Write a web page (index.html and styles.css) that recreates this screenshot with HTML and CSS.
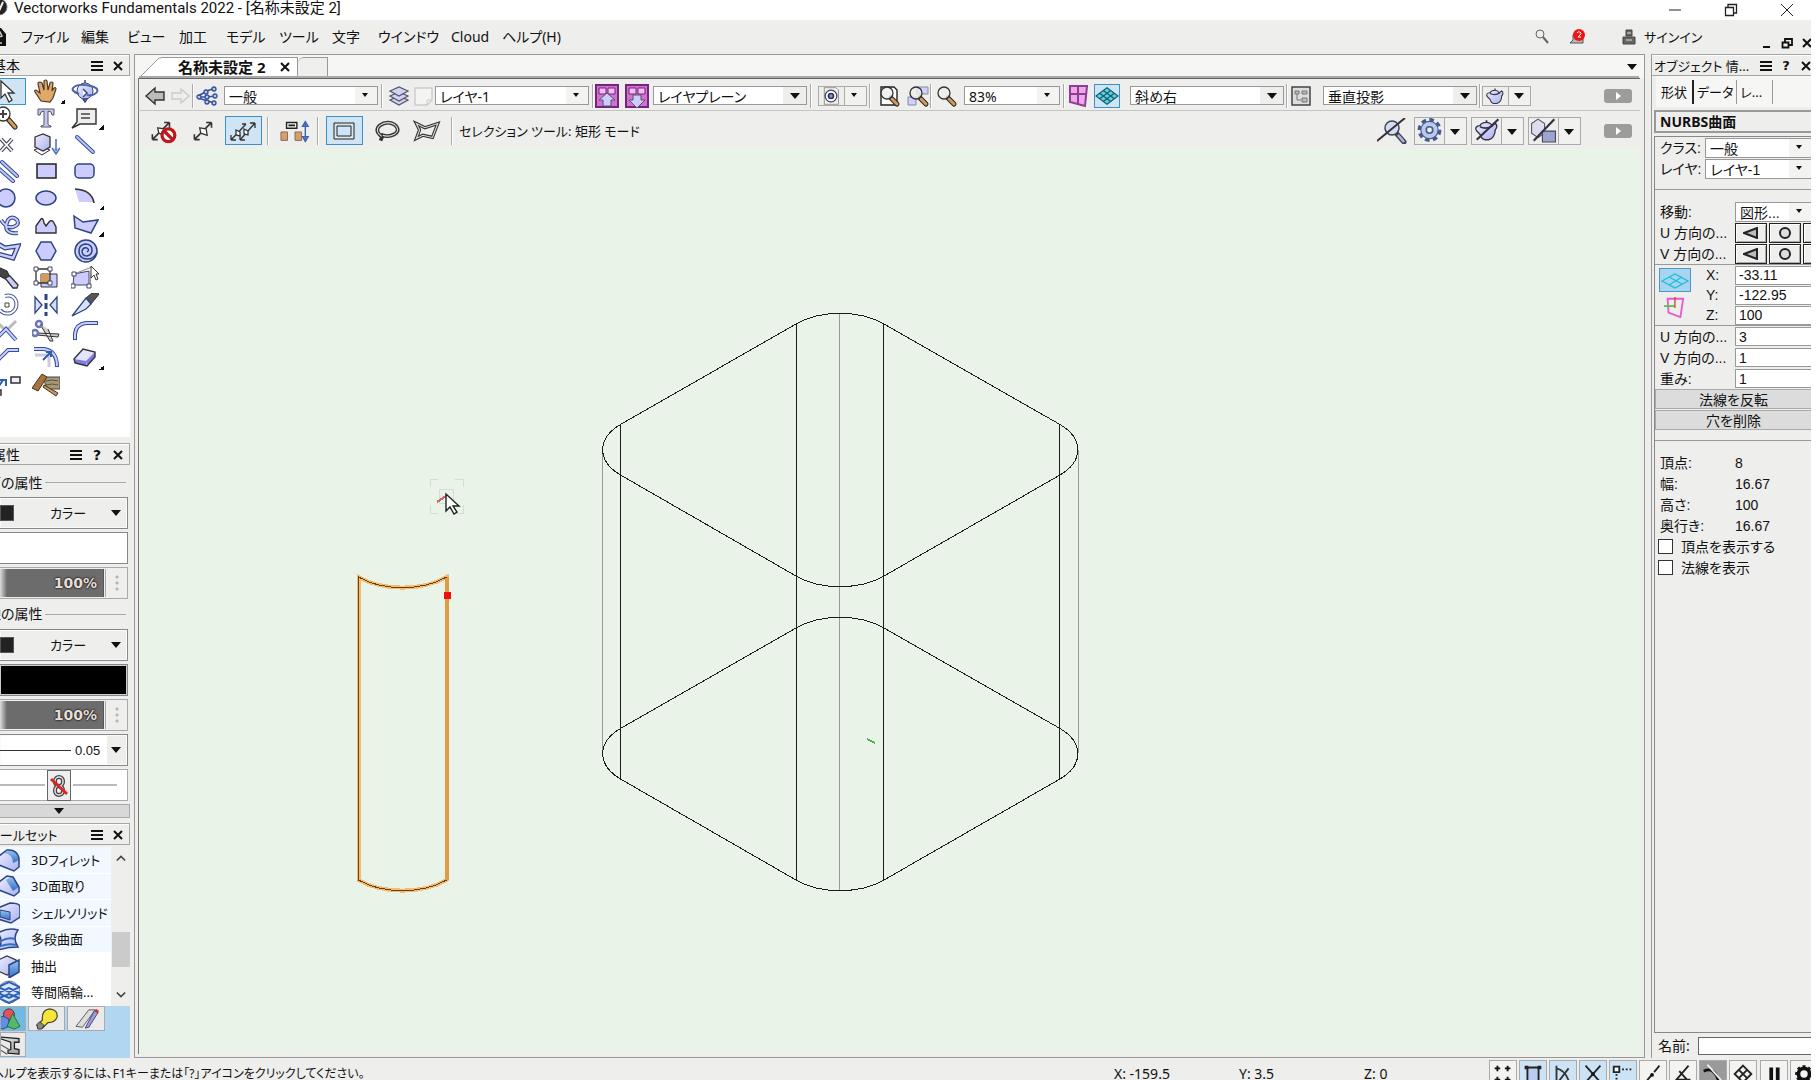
FILE: index.html
```html
<!DOCTYPE html>
<html lang="ja">
<head>
    <meta charset="UTF-8">
    <title>Vectorworks Fundamentals 2022 - [名称未設定 2]</title>
    <link rel="stylesheet" href="styles.css">
</head>
<body>
<!-- shared icons -->
<svg class="defs" aria-hidden="true">
    <linearGradient id="blue" x1="0" y1="0" x2="1" y2="1"><stop offset="0" stop-color="#eef"/><stop offset="1" stop-color="#a9b0f0"/></linearGradient>
    <linearGradient id="deep" x1="0" y1="0" x2="0" y2="1"><stop offset="0" stop-color="#9cc4f2"/><stop offset="1" stop-color="#2f6fc8"/></linearGradient>
    <linearGradient id="grey" x1="0" y1="0" x2="1" y2="1"><stop offset="0" stop-color="#fff"/><stop offset="1" stop-color="#999"/></linearGradient>
    <symbol id="menu" viewBox="0 0 12 12"><path d="M0 2h12M0 6h12M0 10h12" stroke="#111" stroke-width="2"/></symbol>
    <symbol id="close" viewBox="0 0 12 12"><path d="M2 2l8 8M10 2l-8 8" stroke="#111" stroke-width="2"/></symbol>
    <symbol id="lens" viewBox="0 0 24 24"><path d="M14 14l6 6" stroke="#222" stroke-width="5" stroke-linecap="round"/><path d="M15 15l5 5" stroke="#d49a5a" stroke-width="3" stroke-linecap="round"/><circle cx="10" cy="9" r="6" fill="#eee" fill-opacity=".8" stroke="#333" stroke-width="1.3"/></symbol>
    <symbol id="teapot" viewBox="0 0 24 24"><path d="M6 8c-4 0-5 3-3 5l3 3c1 3 2 5 5 5h3c4-1 6-5 6-9 2-2 2-5 0-6l-3 2c-1-2-3-3-5-3s-5 1-6 3z" fill="url(#blue)" stroke="#334" stroke-width="1.3"/><path d="M6 9q6 3 12-1M12 5V3" fill="none" stroke="#334" stroke-width="1.5"/></symbol>
    <symbol id="handles" viewBox="0 0 28 24"><path d="M5 20L21 4M5 20v-5M5 20h5M21 4v5M21 4h-5" stroke="#333" stroke-width="1.5" fill="none"/><path d="M10 9l6 1 1 6-6-2z" fill="#fff" stroke="#333" stroke-width="1.2"/></symbol>
</svg>

<div class="app">
    <header class="titlebar">
        <svg class="logo" viewBox="0 0 18 18"><circle cx="9" cy="9" r="8" fill="#222" stroke="#777"/><path d="M6 4l3 9 4-9" stroke="#eee" stroke-width="2" fill="none"/></svg>
        <span class="title">Vectorworks Fundamentals 2022 - [名称未設定 2]</span>
        <div class="winbtns">
            <button aria-label="最小化"><svg viewBox="0 0 14 14"><path d="M1 7h12" stroke="#222"/></svg></button>
            <button aria-label="元に戻す"><svg viewBox="0 0 14 14"><path d="M1.5 4.5h8v8h-8zM4 4V1.500h8.500v8.500H10" fill="none" stroke="#222" stroke-width="1.3"/></svg></button>
            <button aria-label="閉じる"><svg viewBox="0 0 14 14"><path d="M1 1l12 12M13 1L1 13" stroke="#222"/></svg></button>
        </div>
    </header>

    <nav class="menubar">
        <svg class="doclogo" viewBox="0 0 16 20"><path d="M1 1h9l5 6v12H1z" fill="#111"/><path d="M4 7l5-2 2 4-5 2zM5 16h6" stroke="#ccc" stroke-width="1.5" fill="none"/></svg>
        <ul class="menus">
            <li>ファイル</li>
            <li>編集</li>
            <li>ビュー</li>
            <li>加工</li>
            <li>モデル</li>
            <li>ツール</li>
            <li>文字</li>
            <li>ウインドウ</li>
            <li>Cloud</li>
            <li>ヘルプ(H)</li>
        </ul>
        <div class="account">
            <svg viewBox="0 0 16 16"><circle cx="6" cy="5" r="4" fill="#eee" stroke="#666"/><path d="M9 8l5 6" stroke="#666" stroke-width="2"/></svg>
            <svg class="bell" viewBox="0 0 18 18"><path d="M2 15l3-3V7q1-3 5-3t5 3v8z" fill="#bbb" stroke="#555"/><circle cx="11" cy="7" r="6" fill="#f01414"/><path d="M9 5q1-2 3-1t0 3l-2 2h3" stroke="#fff" fill="none"/></svg>
            <svg class="user" viewBox="0 0 14 16"><path d="M4 1h6v6H4zM1 8h12v7H1z" fill="#666" stroke="#444"/><path d="M5 4h4M4 11h6" stroke="#ddd"/></svg>
            <a href="#">サインイン</a>
        </div>
        <div class="mdi">
            <svg viewBox="0 0 12 12"><path d="M2 10h7" stroke="#111" stroke-width="2"/></svg>
            <svg viewBox="0 0 12 12"><path d="M1.500 5.500h6v5h-6zM4 5V2h7v6H8" fill="none" stroke="#111" stroke-width="1.800"/></svg>
            <svg viewBox="0 0 12 12"><use href="#close"/></svg>
        </div>
    </nav>

    <div class="work">
        <aside class="left">
            <h2 class="head"><span class="cut">基本</span><svg><use href="#menu"/></svg><svg><use href="#close"/></svg></h2>
            <div class="tools">
                <button class="on"><svg viewBox="0 0 28 24"><path d="M8 2v17l4-4 4 8 3-2-4-7h6z" fill="#fff" stroke="#333" stroke-width="1.3"/></svg></button>
                <button class="more"><svg viewBox="0 0 28 24"><path d="M9 22L3 13q-1-2 1-2l4 3-2-9q0-2 2-2l2 1 2 7 0-9q2-2 3 0l1 9 2-7q2-2 3 0l-1 8 2-3q2-1 2 1l-3 9-3 4z" fill="#e2a866" stroke="#4a3a2a" stroke-width="1.2"/></svg></button>
                <button><svg viewBox="0 0 28 24"><circle cx="14" cy="12" r="8" fill="url(#blue)" stroke="#446"/><path d="M8 15q-8-3-6-6 4-5 18-2 8 2 6 6-3 4-10 3" fill="none" stroke="#4a62a8" stroke-width="2"/><path d="M12 10l4 4-4 4M14 1v3M12 20h4l-2 3z" stroke="#35477f" stroke-width="1.500" fill="#fff"/></svg></button>

                <button><svg viewBox="0 0 28 24"><path d="M15 13l7 8" stroke="#222" stroke-width="5" stroke-linecap="round"/><path d="M16 14l6 7" stroke="#d49a5a" stroke-width="3" stroke-linecap="round"/><circle cx="10" cy="8" r="7" fill="#fff" stroke="#333" stroke-width="1.300"/><path d="M6 8h8M10 4v8" stroke="#444" stroke-width="2"/></svg></button>
                <button><svg viewBox="0 0 28 24"><path d="M6 3h16v6h-2q0-4-4-4v13q0 2 3 2v1H9v-1q3 0 3-2V5q-4 0-4 4H6z" fill="#c6c8f4" stroke="#556" /></svg></button>
                <button class="more"><svg viewBox="0 0 28 24"><path d="M6 3h19v15H9l-8 4 5-6z" fill="#eee" stroke="#333" stroke-width="1.400"/><path d="M10 8h9M10 12h9" stroke="#444" stroke-width="1.500"/></svg></button>

                <button><svg viewBox="0 0 28 24"><path d="M8 6l11 12M19 6L8 18" stroke="#445" stroke-width="4"/><path d="M8 6l11 12M19 6L8 18" stroke="#fff" stroke-width="1.800"/></svg></button>
                <button><svg viewBox="0 0 28 24"><path d="M2 17l8-3 8 3-8 5z" fill="#fff" stroke="#333"/><path d="M3 4l8-3 7 3v10l-7 4-8-4z" fill="url(#blue)" stroke="#333" stroke-width="1.300"/><path d="M24 6v12M20 15l4 6 4-6" stroke="#4a6cc0" stroke-width="1.500" fill="#cdf"/></svg></button>
                <button><svg viewBox="0 0 28 24"><path d="M6 4l16 15" stroke="#334e98" stroke-width="4" stroke-linecap="round"/><path d="M6 4l16 15" stroke="#bcc4f6" stroke-width="2" stroke-linecap="round"/></svg></button>

                <button><svg viewBox="0 0 28 24"><path d="M4 8l16 14M9 3l15 14" stroke="#334e98" stroke-width="4" stroke-linecap="round"/><path d="M4 8l16 14M9 3l15 14" stroke="#bcc4f6" stroke-width="2" stroke-linecap="round"/></svg></button>
                <button><svg viewBox="0 0 28 24"><path d="M5 5h19v14H5z" fill="#ccccff" stroke="#222" stroke-width="1.500"/></svg></button>
                <button><svg viewBox="0 0 28 24"><rect x="4" y="5" width="19" height="14" rx="4" fill="#ccccff" stroke="#2c4480" stroke-width="1.500"/></svg></button>

                <button><svg viewBox="0 0 28 24"><circle cx="13" cy="12" r="9" fill="#ccccff" stroke="#2c4480" stroke-width="1.500"/></svg></button>
                <button><svg viewBox="0 0 28 24"><ellipse cx="14" cy="12" rx="10" ry="7" fill="#ccccff" stroke="#2c4480" stroke-width="1.500"/></svg></button>
                <button class="more"><svg viewBox="0 0 28 24"><path d="M4 3l4 13h15Q21 4 4 3z" fill="#ccccff"/><path d="M4 3q17 1 19 14" fill="none" stroke="#333" stroke-width="1.600"/></svg></button>

                <button><svg viewBox="0 0 28 24"><path d="M8 7q6 9 12 7 7-2 4-7-5-5-9 0-3 6-1 10 3 4 11 3" fill="none" stroke="#2c4480" stroke-width="4"/><path d="M8 7q6 9 12 7 7-2 4-7-5-5-9 0-3 6-1 10 3 4 11 3" fill="none" stroke="#ccccff" stroke-width="2"/></svg></button>
                <button><svg viewBox="0 0 28 24"><path d="M4 20V13l5-7q2-2 3 4l2 3 3-4q3-3 5 1l2 4v6z" fill="#ccccff" stroke="#333" stroke-width="1.400"/></svg></button>
                <button class="more"><svg viewBox="0 0 28 24"><path d="M3 3l9 6 15-2-7 13-16-5z" fill="#ccccff" stroke="#2c4480" stroke-width="1.500"/></svg></button>

                <button><svg viewBox="0 0 28 24"><path d="M3 4l9 5 13-2-5 12-15-4" fill="none" stroke="#2c4480" stroke-width="5"/><path d="M3 4l9 5 13-2-5 12-15-4" fill="none" stroke="#ccccff" stroke-width="2.500"/></svg></button>
                <button><svg viewBox="0 0 28 24"><path d="M9 3h10l5 9-5 9H9l-5-9z" fill="#ccccff" stroke="#2c4480" stroke-width="1.500"/></svg></button>
                <button><svg viewBox="0 0 28 24"><circle cx="15" cy="12" r="11" fill="#ccccff" stroke="#2c4480" stroke-width="1.500"/><path d="M26 13q-3 7-9 7-9 0-9-8 0-6 6-7 7 0 7 6 0 5-5 6-5 0-5-5 1-4 5-3 3 2 0 4" fill="none" stroke="#2c4480" stroke-width="1.500"/></svg></button>

                <button><svg viewBox="0 0 28 24"><path d="M5 1l9 4 3 6-5 2-9-5z" fill="#444" stroke="#222"/><path d="M12 12l5-2 8 9-1 3-4 0z" fill="#ccccff" stroke="#333" stroke-width="1.300"/></svg></button>
                <button><svg viewBox="0 0 28 24"><path d="M9 8h16v13H9z" fill="#ccccff" stroke="#334"/><path d="M9 8h8v9H9z" fill="#d49a5a"/><path d="M4 3h14v14H4z" fill="none" stroke="#333" stroke-width="1.300"/><path d="M2 1h4v4H2zM16 1h4v4h-4zM2 15h4v4H2zM16 15h4v4h-4z" fill="#fff" stroke="#446"/></svg></button>
                <button><svg viewBox="0 0 28 24"><path d="M3 8l15-3v14H2z" fill="#ccccff" stroke="#446"/><path d="M3 8L21 1l-2 18" fill="none" stroke="#888"/><path d="M1 6h4v4H1zM0 18h4v4H0zM16 18h4v4h-4z" fill="#fff" stroke="#446"/><path d="M20 0v12l3-3 2 5 2-1-2-5h3z" fill="#fff" stroke="#333"/></svg></button>

                <button><svg viewBox="0 0 28 24"><path d="M12 3q8-2 11 5 2 8-5 12-7 2-11-3" fill="none" stroke="#445a9c" stroke-width="4"/><path d="M12 3q8-2 11 5 2 8-5 12-7 2-11-3" fill="none" stroke="#fff" stroke-width="2"/><path d="M12 10h4v4h-4z" fill="none" stroke="#444"/></svg></button>
                <button><svg viewBox="0 0 28 24"><path d="M3 4v16l7-8zM25 4v16l-7-8z" fill="#d4dcfa" stroke="#2c4480" stroke-width="1.300"/><path d="M14 1v22" stroke="#2c4480" stroke-width="3" stroke-dasharray="6 3"/></svg></button>
                <button><svg viewBox="0 0 28 24"><path d="M15 5l6-5 8 0-9 11z" fill="#555" stroke="#333"/><path d="M15 5l5 6-5 5-14 7z" fill="#d6e2fa" stroke="#2c4480" stroke-width="1.300"/></svg></button>

                <button><svg viewBox="0 0 28 24"><path d="M13 12L23 2M13 12L3 2" stroke="#bbb" stroke-width="3"/><path d="M3 20l10-10 10 11" fill="none" stroke="#334e98" stroke-width="4"/><path d="M3 20l10-10 10 11" fill="none" stroke="#ccccff" stroke-width="2"/></svg></button>
                <button><svg viewBox="0 0 28 24"><path d="M8 5l10 17 3 0-5-12M5 14l22 1-1 3-21-2" fill="#ccc" stroke="#333"/><circle cx="7" cy="5" r="3" fill="none" stroke="#6d76b4" stroke-width="2.500"/><circle cx="3" cy="14" r="3" fill="none" stroke="#6d76b4" stroke-width="2.500"/></svg></button>
                <button><svg viewBox="0 0 28 24"><path d="M4 21v-6Q5 5 15 4h12" fill="none" stroke="#334e98" stroke-width="4"/><path d="M4 20v-5Q5 5 15 4h11" fill="none" stroke="#ccccff" stroke-width="2"/></svg></button>

                <button><svg viewBox="0 0 28 24"><path d="M1 18L15 4h11" fill="none" stroke="#334e98" stroke-width="4"/><path d="M1 18L15 4h10" fill="none" stroke="#ccccff" stroke-width="2"/></svg></button>
                <button><svg viewBox="0 0 28 24"><path d="M3 9h14v12" stroke="#ccd" stroke-width="3" fill="none"/><path d="M2 3h10q13 2 13 18" fill="none" stroke="#334e98" stroke-width="4"/><path d="M2 3h10q13 2 13 17" fill="none" stroke="#ccccff" stroke-width="2"/><path d="M11 14l7-7M14 6h5v5" stroke="#2d5fae" stroke-width="2" fill="none"/></svg></button>
                <button class="more"><svg viewBox="0 0 28 24"><path d="M3 13l9-10 12 3v5l-8 9-12-3z" fill="#e4e4ff"/><path d="M3 13l12 2v5l-11-3zM15 15l9-9v5l-8 9z" fill="#7d7be4"/><path d="M3 13l9-10 12 3v5l-8 9-12-3z" fill="none" stroke="#333" stroke-width="1.400"/></svg></button>

                <button><svg viewBox="0 0 28 24"><path d="M2 19l8-12M6 7h7v6" stroke="#2d5fae" stroke-width="2" fill="none"/><path d="M18 4h9v6h-9zM0 17h8v5H0z" fill="#eef" stroke="#333" stroke-width="1.500"/></svg></button>
                <button><svg viewBox="0 0 28 24"><path d="M12 4h16v12H14z" fill="#a89878" stroke="#444"/><path d="M14 8q6-2 12 0M14 12q6-2 12 0" stroke="#554" fill="none"/><path d="M0 15L10 1l5 3-9 14z" fill="#a9713c" stroke="#432"/><path d="M12 12l14 8-2 3-13-9z" fill="#c99560" stroke="#432"/></svg></button>
            </div>

            <h2 class="head"><span class="cut">属性</span><svg><use href="#menu"/></svg><b>?</b><svg><use href="#close"/></svg></h2>
            <div class="attrs">
                <div class="legend"><span>面の属性</span></div>
                <div class="pick"><i class="chip"></i><select aria-label="面の種類"><option>カラー</option></select></div>
                <div class="swatch"></div>
                <div class="opacity"><output>100%</output><i class="dots"></i></div>
                <div class="legend"><span>線の属性</span></div>
                <div class="pick"><i class="chip"></i><select aria-label="線の種類"><option>カラー</option></select></div>
                <div class="swatch black"></div>
                <div class="opacity"><output>100%</output><i class="dots"></i></div>
                <div class="pick weight"><i class="stroke"></i><select aria-label="線の太さ"><option>0.05</option></select></div>
                <div class="marker">
                    <i></i>
                    <button aria-label="マーカーのリンク"><svg viewBox="0 0 20 26"><g fill="none" stroke="#444" stroke-width="4"><rect x="6" y="4" width="8" height="9" rx="4"/><rect x="6" y="13" width="8" height="9" rx="4"/></g><g fill="none" stroke="#e4e4e4" stroke-width="1.500"><rect x="6" y="4" width="8" height="9" rx="4"/><rect x="6" y="13" width="8" height="9" rx="4"/></g><path d="M2 6l16 15" stroke="#d22" stroke-width="3"/></svg></button>
                    <i></i>
                </div>
                <button class="fold" aria-label="折りたたむ"></button>
            </div>

            <h2 class="head"><span class="cut long">ツールセット</span><svg><use href="#menu"/></svg><svg><use href="#close"/></svg></h2>
            <div class="toolset">
                <ul>
                    <li class="tint"><svg viewBox="0 0 24 24"><path d="M3 8l8-6q10-1 12 8v9l-5 4-15-6z" fill="url(#blue)"/><path d="M8 5q9 1 9 10l6-3Q23 4 13 2z" fill="url(#deep)"/><path d="M3 8l8-6q10-1 12 8v9l-5 4-15-6z" fill="none" stroke="#2c4480" stroke-width="1.500"/></svg>3Dフィレット</li>
                    <li class="tint"><svg viewBox="0 0 24 24"><path d="M3 8l8-6 6 1 6 10v5l-5 4-15-6z" fill="url(#blue)"/><path d="M10 6l6-4 7 11-6 4z" fill="url(#deep)"/><path d="M3 8l8-6 6 1 6 10v5l-5 4-15-6z" fill="none" stroke="#2c4480" stroke-width="1.500"/></svg>3D面取り</li>
                    <li class="tint"><svg viewBox="0 0 24 24"><path d="M2 7l12-5q10 0 10 4v10l-9 6-13-4z" fill="url(#blue)" stroke="#2c4480" stroke-width="1.500"/><path d="M4 9l10 2v8L4 16z" fill="url(#deep)" stroke="#2c4480"/></svg>シェルソリッド</li>
                    <li class="tint"><svg viewBox="0 0 24 24"><path d="M2 6q10-6 20-3-6 8 0 17-10 0-20 3 6-9 0-17z" fill="url(#blue)" stroke="#2c4480" stroke-width="1.500"/><path d="M5 14q7-4 14-2M5 19q8-3 15-1" stroke="#2f6fc8" fill="none" stroke-width="2"/></svg>多段曲面</li>
                    <li><svg viewBox="0 0 24 24"><path d="M2 6l9-4 9 4v10l-9 5-9-4z" fill="url(#blue)" stroke="#334" stroke-width="1.300"/><path d="M13 11l10-5v12l-10 6z" fill="url(#deep)" stroke="#2c4480" stroke-width="1.500"/></svg>抽出</li>
                    <li><svg viewBox="0 0 24 24"><circle cx="13" cy="12" r="11" fill="#dde6fb" stroke="#889"/><path d="M2 7l11-5 11 5-11 5zM2 13l11-5 11 5-11 5zM3 18l10-4 10 4-10 5z" fill="none" stroke="#2e62b4" stroke-width="2"/></svg>等間隔輪...</li>
                </ul>
                <div class="scroll"><svg viewBox="0 0 12 8"><path d="M1 7l5-5 5 5" fill="none" stroke="#444" stroke-width="2"/></svg><i></i><svg viewBox="0 0 12 8"><path d="M1 1l5 5 5-5" fill="none" stroke="#444" stroke-width="2"/></svg></div>
            </div>
            <div class="sets">
                <button class="on"><svg viewBox="0 0 28 24"><circle cx="15" cy="7" r="6" fill="#e0535c" stroke="#622"/><path d="M2 11l7-2 6 3v8l-7 3-6-3z" fill="#5b8fe8" stroke="#247"/><path d="M19 6l8 14-6 3-8-3z" fill="#58b868" stroke="#264"/></svg></button>
                <button><svg viewBox="0 0 28 24"><path d="M3 19l6-6Q8 2 17 1q9 1 8 9-2 6-10 6l-6 6z" fill="#f8e53a" stroke="#443" stroke-width="1.300"/><path d="M3 18l3-3 5 4-3 4H4z" fill="#888" stroke="#333"/></svg></button>
                <button><svg viewBox="0 0 28 24"><path d="M2 20L16 2h7L9 21z" fill="#ddd" stroke="#555"/><path d="M12 22L22 3l4 2-10 16z" fill="#9a9ce0" stroke="#446"/><path d="M22 3l2-2 3 2-1 3z" fill="#c33"/></svg></button>
                <button><svg viewBox="0 0 28 24"><path d="M0 3l26 2v4l-5 0v7l5 1v5l-12-1v-3l3-1V9z" fill="url(#grey)" stroke="#222" stroke-width="1.400"/><path d="M0 8l15 9M0 14l13 8" stroke="#555" stroke-width="1.300"/></svg></button>
            </div>
        </aside>

        <main class="doc">
            <div class="tabs">
                <svg class="slant" viewBox="0 0 22 21"><path d="M0 21L20 0h2v21z" fill="#fff"/><path d="M0 21L20 1h2" fill="none" stroke="#999"/></svg>
                <div class="tab">名称未設定 2 <svg><use href="#close"/></svg></div>
                <div class="tab blank"></div>
                <i class="tri"></i>
            </div>

            <div class="viewbar">
                <svg class="ic" viewBox="0 0 24 24"><path d="M3 12l9-8v4h9v8h-9v4z" fill="#bbb" stroke="#333" stroke-width="1.400"/></svg>
                <svg class="ic" viewBox="0 0 24 24"><path d="M21 12l-8-7v4H4v6h9v4z" fill="#eee" stroke="#ccc" stroke-width="1.400"/></svg>
                <i class="sep"></i>
                <svg class="ic" viewBox="0 0 24 24"><path d="M3 12l9-5 8-3M3 13h9l8-1M3 14l10 3 6 2" fill="none" stroke="#35509a" stroke-width="1.500"/><g fill="#b9c8f0" stroke="#35509a" stroke-width="1.300"><circle cx="4" cy="13" r="2"/><circle cx="11" cy="8" r="2"/><circle cx="19" cy="5" r="2"/><circle cx="12" cy="13" r="2"/><circle cx="20" cy="12" r="2"/><circle cx="12" cy="18" r="2"/><circle cx="19" cy="19" r="2"/></g></svg>
                <div class="drop small"><select aria-label="クラス"><option>一般</option></select></div>
                <i class="sep"></i>
                <svg class="ic" viewBox="0 0 24 24"><g fill="#d0d4f2" stroke="#556" stroke-width="1.200"><path d="M3 16l9-4 9 4-9 5z"/><path d="M3 12l9-4 9 4-9 5z"/><path d="M3 7l9-4 9 4-9 5z"/></g></svg>
                <svg class="ic" viewBox="0 0 24 24"><path d="M4 4h17v12l-5 5H4z" fill="#f4f4f2" stroke="#ccc" stroke-width="1.400"/><path d="M16 21v-5h5" fill="none" stroke="#ccc"/></svg>
                <div class="drop small"><select aria-label="レイヤ"><option>レイヤ-1</option></select></div>
                <i class="sep"></i>
                <svg class="ic" viewBox="0 0 24 24"><path d="M1 1h22v22H1z" fill="#d46fd4" stroke="#73277a" stroke-width="2"/><path d="M4 4h7v6H4zM13 4h7v6h-7z" fill="#f2c0f0" stroke="#73277a"/><path d="M12 9l8 7h-4v6H8v-6H4z" fill="#ccccff" stroke="#556"/></svg>
                <svg class="ic" viewBox="0 0 24 24"><path d="M1 1h22v22H1z" fill="#d46fd4" stroke="#73277a" stroke-width="2"/><path d="M4 4h7v6H4zM13 4h7v6h-7z" fill="#f2c0f0" stroke="#73277a"/><path d="M12 24l8-8h-4v-5H8v5H4z" fill="#ccccff" stroke="#556"/></svg>
                <div class="drop"><select aria-label="プレーン"><option>レイヤプレーン</option></select></div>
                <i class="sep"></i>
                <button class="split small"><svg viewBox="0 0 24 24"><path d="M4 2h14l3 3v17H4z" fill="#eee" stroke="#888"/><circle cx="12" cy="12" r="7" fill="#fff" stroke="#445" stroke-width="1.500"/><circle cx="12" cy="12" r="3" fill="#7a9ad4" stroke="#335" stroke-width="2"/></svg></button>
                <i class="sep"></i>
                <svg class="ic" viewBox="0 0 24 24"><path d="M4 3h13l3 3v15H4z" fill="#fff" stroke="#222" stroke-width="1.400"/><use href="#lens"/></svg>
                <svg class="ic" viewBox="0 0 24 24"><path d="M11 3h11v7H11zM2 13h8v8H2z" fill="#d0d0ff" stroke="#889"/><use href="#lens"/></svg>
                <i class="sep"></i>
                <svg class="ic"><use href="#lens"/></svg>
                <div class="drop small zoom"><select aria-label="ズーム"><option>83%</option></select></div>
                <i class="sep"></i>
                <svg class="ic" viewBox="0 0 24 24"><path d="M4 2l17 0-2 20-15-4z" fill="#f0a8ec" stroke="#8f3c94" stroke-width="2"/><path d="M12 2v18M4 10h16" stroke="#8f3c94" stroke-width="2"/></svg>
                <button class="mode sq on"><svg viewBox="0 0 26 24"><path d="M1 12L13 3l12 9-12 9z" fill="#62d0e0" stroke="#14606e" stroke-width="1.400"/><path d="M5 9l12 9M9 6l12 9M5 15l12-9M9 18l12-9" stroke="#14606e" stroke-width="1.400"/></svg></button>
                <div class="drop"><select aria-label="ビュー"><option>斜め右</option></select></div>
                <i class="sep"></i>
                <svg class="ic" viewBox="0 0 24 24"><path d="M3 3h18v18H3z" fill="#ddd" stroke="#444" stroke-width="1.500"/><path d="M6 7h4v3H6zM13 7h5v3h-5zM13 14h5v4h-5z" fill="#bbb" stroke="#777"/><path d="M8 10v6h4" stroke="#777" fill="none"/></svg>
                <div class="drop"><select aria-label="投影"><option>垂直投影</option></select></div>
                <i class="sep"></i>
                <button class="split"><svg><use href="#teapot"/></svg></button>
                <button class="pill" aria-label="その他"></button>
            </div>

            <div class="modebar">
                <svg class="wide" viewBox="0 0 28 24"><use href="#handles"/><circle cx="20" cy="16" r="6" fill="#fff" stroke="#c01818" stroke-width="3"/><path d="M16 12l8 8" stroke="#c01818" stroke-width="3"/></svg>
                <svg class="wide"><use href="#handles"/></svg>
                <button class="mode on"><svg viewBox="0 0 28 24"><g fill="#fff" stroke="#333" stroke-width="1.300"><path d="M2 21L17 5M2 21v-5M2 21h5M17 5h-4M11 21L26 4M11 21v-5M11 21h5M26 4v5M26 4h-5"/><path d="M7 11l4 2 0 4-4-1zM15 10l4 2 0 4-4-1z"/></g></svg></button>
                <i class="sep"></i>
                <svg class="wide" viewBox="0 0 32 24"><path d="M7 3h11v6H7z" fill="#fff" stroke="#222" stroke-width="1.500"/><path d="M9 6h7" stroke="#222" stroke-width="2"/><path d="M1 13h7v9H1zM16 13h7v9h-7z" fill="#d4a06a" stroke="#865"/><path d="M27 4v17M24 7l3-5 3 5zM24 18l3 5 3-5z" stroke="#3b64b2" fill="#9ab8ee" stroke-width="1.500"/></svg>
                <i class="sep"></i>
                <button class="mode on"><svg viewBox="0 0 28 24"><path d="M4 4h20v16H4z" fill="#dde6ec" stroke="#222"/><path d="M7 7h14v10H7z" fill="#cfe5f6" stroke="#222"/></svg></button>
                <svg class="wide" viewBox="0 0 28 24"><g fill="none"><path d="M9 17q-7-5-2-10 7-5 14-1 6 5 0 9-6 3-11 1l-2 5" stroke="#333" stroke-width="3.500"/><path d="M9 17q-7-5-2-10 7-5 14-1 6 5 0 9-6 3-11 1" stroke="#ddd" stroke-width="1"/></g></svg>
                <svg class="wide" viewBox="0 0 28 24"><g fill="none"><path d="M5 5l8 4 12-4-5 13-9-2-6 3L8 11z" stroke="#333" stroke-width="3"/><path d="M5 5l8 4 12-4-5 13-9-2-6 3L8 11z" stroke="#ddd" stroke-width="1"/></g></svg>
                <i class="sep"></i>
                <span>セレクション ツール: 矩形 モード</span>
                <svg class="wide" viewBox="0 0 30 26"><path d="M20 16l7 8" stroke="#445" stroke-width="5" stroke-linecap="round"/><path d="M21 17l6 7" stroke="#aeb9e4" stroke-width="2.500"/><circle cx="15" cy="10" r="7" fill="#d4dcf6" stroke="#445" stroke-width="1.500"/><path d="M0 23L28 0" stroke="#333" stroke-width="2"/></svg>
                <button class="split big"><svg viewBox="0 0 24 24"><circle cx="12" cy="12" r="9" fill="none" stroke="#445a8c" stroke-width="4" stroke-dasharray="4 3"/><circle cx="12" cy="12" r="8" fill="#bcc8ea" stroke="#445a8c"/><circle cx="12" cy="12" r="3" fill="#eee" stroke="#445a8c" stroke-width="1.500"/></svg></button>
                <button class="split big"><svg viewBox="0 0 24 24"><use href="#teapot"/><path d="M3 21L23 2" stroke="#334" stroke-width="2"/></svg></button>
                <button class="split big"><svg viewBox="0 0 24 24"><path d="M1 6l6-4 6 4v9l-6 4-6-4z" fill="#dde" stroke="#556"/><path d="M11 13h12v10H11z" fill="#9ba6d0" stroke="#445"/><path d="M3 22L22 2" stroke="#334" stroke-width="2"/></svg></button>
                <button class="pill" aria-label="その他"></button>
            </div>

            <div class="canvas">
                <svg class="drawing">
                    <g transform="translate(-139 -148)" fill="none" shape-rendering="crispEdges">
                        <!-- silhouette lines -->
                        <path d="M602.5 450v303M1078.500 450v303M839.500 313v577" stroke="#969c96"/>
                        <!-- top and bottom faces -->
                        <g stroke="#1b1b1b">
                            <path id="face" d="M620.500 424.500L796 324A62 36 0 0 1 884 324L1060 424.500A62 36 0 0 1 1060 475L884 576A62 36 0 0 1 796 576L620.500 475A62 36 0 0 1 620.500 424.500z"/>
                            <use href="#face" y="304"/>
                            <path d="M620.500 425v354M796 324v557M883.500 324v557M1059.500 425v354"/>
                        </g>
                        <path d="M867 739l8 4" stroke="#4fae50" stroke-width="2"/>
                        <!-- selected surface -->
                        <path d="M358.500 577A62 36 0 0 0 446.500 577V880A62 36 0 0 1 358.500 880z" stroke="#f3bd76" stroke-width="4"/>
                        <path d="M446.500 577V880" stroke="#e39a45" stroke-width="4"/>
                        <path d="M446.500 577A62 36 0 0 1 358.500 577V880A62 36 0 0 0 446.500 880" stroke="#6b3f10"/>
                        <path d="M444 592h7v7h-7z" fill="#ee0f0f"/>
                        <!-- snap box and pointer -->
                        <path d="M430 487v-8h8M455 479h8v8M463 505v8h-8M438 513h-8v-8M439 489h14v14h-14z" stroke="#d3ddd2"/>
                        <path d="M437 502l9-6" stroke="#d2646c" stroke-width="2"/>
                        <path d="M446 494v17l4-4 4 7 3-2-4-6h6z" fill="#fff" stroke="#222" stroke-width="1.400" shape-rendering="auto"/>
                    </g>
                </svg>
            </div>
        </main>

        <aside class="right">
            <h2 class="head"><span>オブジェクト 情...</span><svg><use href="#menu"/></svg><b>?</b><svg><use href="#close"/></svg></h2>
            <div class="oiptabs"><a href="#" class="on">形状</a><a href="#">データ</a><a href="#">レ...</a></div>
            <div class="objname">NURBS曲面</div>
            <form class="info">
                <div class="row"><label for="cls">クラス:</label><div class="drop small"><select id="cls"><option>一般</option></select></div></div>
                <div class="row"><label for="lay">レイヤ:</label><div class="drop small"><select id="lay"><option>レイヤ-1</option></select></div></div>
                <hr>
                <div class="row col"><label for="mv">移動:</label><div class="drop small"><select id="mv"><option>図形...</option></select></div></div>
                <div class="row col"><span>U 方向の...</span><div class="steps"><button type="button"><svg viewBox="0 0 16 12"><path d="M1 6l13-5v10z" fill="#bbb" stroke="#222" stroke-width="2"/></svg></button><button type="button"><svg viewBox="0 0 16 12"><circle cx="8" cy="6" r="5" fill="#ddd" stroke="#222" stroke-width="2"/></svg></button><button type="button"></button></div></div>
                <div class="row col"><span>V 方向の...</span><div class="steps"><button type="button"><svg viewBox="0 0 16 12"><path d="M1 6l13-5v10z" fill="#bbb" stroke="#222" stroke-width="2"/></svg></button><button type="button"><svg viewBox="0 0 16 12"><circle cx="8" cy="6" r="5" fill="#ddd" stroke="#222" stroke-width="2"/></svg></button><button type="button"></button></div></div>
                <div class="coords">
                    <div class="planes">
                        <button type="button" class="on"><svg viewBox="0 0 30 22"><path d="M2 12l13-7 13 7-13 7zM9 8l13 7M9 16l13-8" fill="none" stroke="#18bede" stroke-width="1.300"/></svg></button>
                        <svg viewBox="0 0 30 24"><path d="M8 3h17l-3 20-13-5z" fill="none" stroke="#ec58cc" stroke-width="2"/><path d="M4 11h12" stroke="#4cc84c" stroke-width="2"/><path d="M16 1v12" stroke="#e04040" stroke-width="1.500"/></svg>
                    </div>
                    <div>
                        <div class="row xyz"><label for="x">X:</label><input id="x" value="-33.11"></div>
                        <div class="row xyz"><label for="y">Y:</label><input id="y" value="-122.95"></div>
                        <div class="row xyz"><label for="z">Z:</label><input id="z" value="100"></div>
                    </div>
                </div>
                <div class="row col"><label for="ud">U 方向の...</label><input id="ud" value="3"></div>
                <div class="row col"><label for="vd">V 方向の...</label><input id="vd" value="1"></div>
                <div class="row col"><label for="wt">重み:</label><input id="wt" value="1"></div>
                <button type="button" class="act">法線を反転</button>
                <button type="button" class="act">穴を削除</button>
                <hr>
                <div class="row col"><span>頂点:</span><span>8</span></div>
                <div class="row col"><span>幅:</span><span>16.67</span></div>
                <div class="row col"><span>高さ:</span><span>100</span></div>
                <div class="row col"><span>奥行き:</span><span>16.67</span></div>
                <label class="check"><input type="checkbox">頂点を表示する</label>
                <label class="check"><input type="checkbox">法線を表示</label>
            </form>
            <div class="name"><label for="nm">名前:</label><input id="nm"></div>
        </aside>
    </div>

    <footer class="status">
        <p>ヘルプを表示するには、F1キーまたは「?」アイコンをクリックしてください。</p>
        <span>X: -159.5</span>
        <span>Y: 3.5</span>
        <span>Z: 0</span>
        <div class="snaps">
            <button><svg viewBox="0 0 28 28"><path d="M5 8h6M8 5v6M16 8h6M19 5v6M5 20h6M8 17v6M16 20h6M19 17v6" stroke="#111" stroke-width="2"/></svg></button>
            <button class="on"><svg viewBox="0 0 28 28"><path d="M8 7h12v16H8z" fill="#b8cdf0" stroke="#222" stroke-width="2"/><path d="M5 5h4v4H5zM19 5h4v4h-4z" fill="#222"/></svg></button>
            <button class="on"><svg viewBox="0 0 28 28"><path d="M7 5v20L20 8M7 8q10 2 14 16" fill="none" stroke="#333" stroke-width="2"/></svg></button>
            <button class="on"><svg viewBox="0 0 28 28"><path d="M6 5l16 18M22 5L6 23" stroke="#222" stroke-width="2"/><circle cx="14" cy="14" r="2" fill="#111"/></svg></button>
            <button class="on"><svg viewBox="0 0 28 28"><path d="M4 6h6v6H4z" fill="#fff" stroke="#222" stroke-width="2"/><path d="M13 9h12M7 14v10" stroke="#222" stroke-width="2" stroke-dasharray="2 2"/></svg></button>
            <button><svg viewBox="0 0 28 28"><path d="M21 5L5 24" stroke="#222" stroke-width="2" stroke-dasharray="9 3"/><circle cx="13" cy="15" r="2" fill="#111"/></svg></button>
            <button><svg viewBox="0 0 28 28"><path d="M20 5L7 20h15M10 11l10 11" fill="none" stroke="#222" stroke-width="2"/></svg></button>
            <button class="dark"><svg viewBox="0 0 28 28"><path d="M4 11q12-6 17 14" fill="none" stroke="#111" stroke-width="3"/><path d="M8 4l15 17" stroke="#eee" stroke-width="2"/></svg></button>
            <button><svg viewBox="0 0 28 28"><path d="M14 5l9 9-9 9-9-9zM9 9l10 10M19 9L9 19" fill="none" stroke="#222" stroke-width="2"/></svg></button>
        </div>
        <div class="snaps two">
            <button><svg viewBox="0 0 28 28"><path d="M9 7h4v16H9zM16 7h4v16h-4z" fill="#111"/></svg></button>
            <button><svg viewBox="0 0 28 28"><circle cx="14" cy="14" r="6" fill="none" stroke="#111" stroke-width="4"/><circle cx="14" cy="14" r="8" fill="none" stroke="#111" stroke-width="3" stroke-dasharray="3 3"/></svg></button>
        </div>
    </footer>
</div>
</body>
</html>
```

FILE: styles.css
```css
*{
    margin: 0;
    padding: 0;
    box-sizing: border-box;
}
body{
    background: #fff;
    color: #111;
    font: 14px/20px "Noto Sans", "Noto Sans CJK JP", sans-serif;
    font-feature-settings: "palt";
    overflow: hidden;
}
ul{
    list-style: none;
}
a{
    color: inherit;
    text-decoration: none;
}
button, input, select{
    font: inherit;
    font-feature-settings: inherit;
    color: inherit;
    border: 0;
    border-radius: 0;
    background: none;
}
button, svg{
    display: block;
    flex: none;
}
select{
    appearance: none;
    width: 100%;
    height: 100%;
}
.defs{
    position: absolute;
    width: 0;
    height: 0;
}
.app{
    display: flex;
    flex-direction: column;
    height: 100vh;
    margin-right: 5px;
    background: #eeeeed;
    overflow: hidden;
}

/* title + menu */
.titlebar{
    display: flex;
    height: 20px;
    background: #fff;
}
.logo{
    width: 18px;
    height: 18px;
    margin: -2px 6px 0 -10px;
}
.title{
    flex: 1;
    font: 15px/16px Roboto, "Noto Sans CJK JP", sans-serif;
    white-space: nowrap;
}
.winbtns{
    display: flex;
    gap: 42px;
    padding-right: 17px;
}
.winbtns svg{
    width: 14px;
    height: 14px;
}
.menubar{
    display: flex;
    align-items: center;
    height: 34px;
}
.doclogo{
    width: 16px;
    height: 20px;
    margin: 0 14px 0 -9px;
}
.menus{
    display: grid;
    grid-template-columns: 60px 46px 52px 47px 53px 53px 46px 73px 51px auto;
    flex: 1;
    white-space: nowrap;
}
.account{
    display: flex;
    align-items: center;
}
.account svg{
    width: 16px;
    height: 16px;
}
.account .bell{
    width: 18px;
    height: 18px;
    margin: 0 36px 0 18px;
}
.account .user{
    width: 14px;
    margin-right: 8px;
}
.account a{
    width: 117px;
    font-size: 13px;
}
.mdi{
    display: flex;
    gap: 8px;
    padding-top: 12px;
    margin-right: -2px;
}
.mdi svg{
    width: 12px;
    height: 12px;
}

/* palettes */
.work{
    display: flex;
    flex: 1;
    min-height: 0;
}
.left{
    display: flex;
    flex-direction: column;
    width: 130px;
    margin-right: 4px;
    overflow: hidden;
}
.head{
    display: flex;
    align-items: center;
    gap: 9px;
    flex: none;
    height: 22px;
    padding: 1px 5px 0 0;
    border: 1px solid #a5a5a5;
    border-left: 0;
    box-shadow: inset 0 1px #fff;
    font-size: 14px;
    font-weight: normal;
    white-space: nowrap;
}
.head span{
    flex: 1;
    min-width: 0;
}
.head .cut{
    margin-left: -8px;
}
.head .long{
    margin-left: -12px;
    font-size: 13px;
}
.head svg{
    width: 12px;
    height: 12px;
}
.head b{
    width: 12px;
    text-align: center;
    font-family: "DejaVu Sans", sans-serif;
}
.tools{
    display: grid;
    grid-template-columns: repeat(3, 39px);
    grid-template-rows: repeat(12, 1fr);
    flex: none;
    height: 361px;
    padding: 2px 0 39px;
    margin-bottom: 6px;
    background: #fff;
}
.tools button{
    position: relative;
    display: flex;
    align-items: center;
    justify-content: center;
    left: -13px;
}
.tools svg{
    width: 28px;
    height: 24px;
}
.tools .on{
    background: #cfe5f6;
    border: 1px solid #3c93cf;
}
.more::after{
    content: "";
    position: absolute;
    right: 0;
    bottom: 1px;
    width: 5px;
    height: 5px;
    background: linear-gradient(135deg, transparent 50%, #111 50%);
}

/* attributes */
.attrs{
    display: grid;
    gap: 3px;
    padding-right: 2px;
    margin-bottom: 5px;
}
.legend{
    display: flex;
    align-items: center;
    gap: 2px;
    height: 24px;
    margin-left: -13px;
    padding-right: 2px;
    white-space: nowrap;
}
.legend:first-child{
    height: 29px;
    padding-top: 6px;
}
.legend::after{
    content: "";
    flex: 1;
    border-top: 1px solid #aaa;
}
.pick{
    position: relative;
    display: flex;
    align-items: center;
    height: 32px;
    border: 1px solid #888;
    border-left: 0;
    box-shadow: inset 0 0 0 1px #fafafa;
}
.pick select{
    padding-left: 36px;
    font-size: 13px;
}
.chip{
    flex: none;
    width: 14px;
    height: 16px;
    background: #222;
    border: 1px solid #555;
}
.pick::after{
    content: "";
    position: absolute;
    right: 6px;
    border: 5px solid transparent;
    border-top: 6px solid #111;
    border-bottom: 0;
}
.swatch{
    height: 32px;
    background: #fff;
    border: 1px solid #888;
    border-left: 0;
}
.black{
    background: #000;
    box-shadow: inset 0 0 0 1px #ccc;
}
.opacity{
    display: flex;
    height: 32px;
    padding: 1px 0;
    border: 1px solid #aaa;
    border-left: 0;
}
.opacity output{
    width: 104px;
    padding-right: 6px;
    background: linear-gradient(90deg, #ddd, #6c6c6c 7px);
    border-right: 1px solid #555;
    color: #e6ddd6;
    font: bold 14px/28px "DejaVu Sans", sans-serif;
    text-align: right;
    text-shadow: 0 0 2px #111, 0 0 2px #111;
}
.dots{
    flex: 1;
    margin-left: 1px;
    border-left: 1px solid #aaa;
    background: radial-gradient(circle, #b5b5b5 1px, transparent 2px) center / 6px 6px repeat-y;
    background-clip: content-box;
    padding: 6px 0;
}
.weight{
    background: linear-gradient(90deg, #fff 107px, #eeeeed 107px);
}
.stroke{
    flex: none;
    width: 71px;
    border-top: 1px solid #333;
}
.weight select{
    padding-left: 4px;
    font: 13px "Liberation Sans", sans-serif;
}
.marker{
    display: flex;
    align-items: center;
    height: 32px;
    padding-right: 10px;
    background: #fff;
    border: 1px solid #aaa;
    border-left: 0;
}
.marker i{
    flex: 1;
    border-top: 2px solid #bbb;
}
.marker button{
    height: 31px;
    padding: 2px 1px;
    margin: 0 2px;
    border: 1px solid #666;
    background: #eee;
}
.marker svg{
    width: 20px;
    height: 26px;
}
.fold{
    display: grid;
    place-items: center;
    height: 14px;
    margin-right: -2px;
    background: #d8d8d8;
    border: 1px solid #aaa;
    border-left: 0;
}
.fold::after, .tri{
    content: "";
    border: 5px solid transparent;
    border-top: 6px solid #111;
    border-bottom: 0;
}
.fold::after{
    margin-right: 11px;
}

/* tool sets */
.toolset{
    display: flex;
    flex: none;
    height: 159px;
    margin-top: 2px;
}
.toolset ul{
    display: grid;
    grid-template-rows: repeat(6, 1fr);
    width: 111px;
    background: #fff;
    font-size: 13px;
}
.toolset li{
    display: flex;
    align-items: center;
    gap: 11px;
    margin-bottom: 1px;
    white-space: nowrap;
}
.toolset li svg{
    width: 24px;
    height: 24px;
    margin-left: -4px;
}
.tint{
    background: #f2f8ff;
}
.scroll{
    flex: 1;
    display: flex;
    flex-direction: column;
    align-items: center;
    padding: 7px 0;
}
.scroll svg{
    width: 10px;
    height: 8px;
}
.scroll i{
    width: 18px;
    height: 35px;
    margin: auto 0 24px;
    background: #cbcbcb;
}
.sets{
    display: grid;
    grid-template-columns: 26px 37px 38px;
    grid-template-rows: 25px 25px;
    gap: 1px 2px;
    flex: 1;
    background: #b1d6f1;
    overflow: hidden;
}
.sets button{
    display: flex;
    align-items: center;
    justify-content: flex-end;
    padding-right: 4px;
    background: #eaeaea;
    border: 1px solid #aaa;
    overflow: hidden;
}
.sets .on{
    background: #6ebbe2;
}
.sets svg{
    width: 26px;
    height: 22px;
}

/* document */
.doc{
    display: flex;
    flex-direction: column;
    flex: 1;
    min-width: 0;
    margin-right: 6px;
    border: 1px solid #999;
}
.tabs{
    display: flex;
    align-items: flex-end;
    height: 23px;
    padding-left: 4px;
    background: #f6f6f4;
}
.slant{
    width: 22px;
    height: 21px;
}
.tab{
    display: flex;
    align-items: center;
    gap: 14px;
    height: 21px;
    padding: 0 6px 2px 17px;
    background: #fff;
    border: 1px solid #999;
    border-width: 1px 1px 0 0;
    font: bold 15px/18px "Noto Sans", "Noto Sans CJK JP", sans-serif;
    white-space: nowrap;
}
.tab svg{
    width: 12px;
    height: 12px;
}
.blank{
    width: 30px;
    background: #efefee;
    border-radius: 6px 0 0 0;
}
.tri{
    margin: 0 7px 8px auto;
}
.viewbar, .modebar{
    display: grid;
    align-items: center;
    flex: none;
    margin: 0 4px 0 3px;
    border-left: 1px solid #777;
}
.viewbar{
    grid-template-columns: 25px 24px 3px 29px 157px 6px 24px 24px 157px 3px 30px 28px 157px 8px 51px 8px 29px 24px 4px 30px 99px 3px 28px 36px 156px 3px 34px 156px 3px 1fr auto;
    height: 33px;
    padding: 2px 8px 0 4px;
    border-top: 1px solid #666;
    border-bottom: 1px solid #c4c4c4;
    box-shadow: 0 -3px 0 -1px #aaa;
}
.modebar{
    grid-template-columns: 42px 36px 42px 13px 37px 9px 46px 39px 40px 8px 1fr 37px 57px 57px 76px auto;
    height: 37px;
    padding: 2px 8px 0;
}
.modebar span{
    font-size: 13px;
}
.sep{
    width: 2px;
    height: 24px;
    border-left: 1px solid #aaa;
    border-right: 1px solid #fff;
}
.modebar .sep{
    height: 28px;
}
.ic{
    width: 24px;
    height: 24px;
}
.wide{
    width: 30px;
    height: 26px;
}
.drop{
    position: relative;
    width: 154px;
    height: 19px;
    background: #fff;
    border: 1px solid #999;
    box-shadow: inset -23px 0 #eeeeed;
}
.drop select{
    padding-left: 4px;
    line-height: 16px;
}
.zoom{
    width: 96px;
}
.drop::after, .split::after{
    content: "";
    position: absolute;
    right: 6px;
    top: 6px;
    border: 5px solid transparent;
    border-top: 6px solid #111;
    border-bottom: 0;
    pointer-events: none;
}
.small.drop::after, .small.split::after{
    right: 9px;
    border-width: 4px 3px 0;
}
.small.drop{
    box-shadow: inset -22px 0 #f3f3f2;
}
.split{
    position: relative;
    width: 49px;
    height: 20px;
    background: linear-gradient(90deg, transparent 25px, #aaa 25px, #aaa 26px, #f1f1f0 26px);
    border: 1px solid #aaa;
}
.split svg{
    width: 24px;
    height: 20px;
    margin-top: -1px;
}
.split.big{
    width: 53px;
    height: 28px;
    padding-left: 1px;
    background: linear-gradient(90deg, transparent 29px, #aaa 29px, #aaa 30px, #f1f1f0 30px);
}
.big svg{
    width: 27px;
    height: 26px;
}
.big::after{
    top: 11px;
}
.mode{
    width: 37px;
    height: 29px;
    padding: 1px 3px;
}
.mode svg{
    width: 28px;
    height: 24px;
}
.mode.on{
    background: #cfe5f6;
    border: 1px solid #3c8fca;
}
.mode.sq{
    width: 26px;
    height: 24px;
    padding: 0;
}
.sq svg{
    width: 24px;
    height: 22px;
}
.pill{
    display: grid;
    place-items: center;
    width: 28px;
    height: 14px;
    background: #9c9c9b;
    border-radius: 3px;
}
.pill::after{
    content: "";
    border: 4px solid transparent;
    border-left: 5px solid #fff;
    border-right: 0;
}
.canvas{
    flex: 1;
    min-height: 0;
    margin: 0 4px 3px 3px;
    border-left: 1px solid #777;
    background: #e9f3e8;
    overflow: hidden;
}
.drawing{
    width: 100%;
    height: 100%;
}

/* object info */
.right{
    display: flex;
    flex-direction: column;
    width: 160px;
    overflow: hidden;
    border-left: 1px solid #999;
}
.right .head{
    gap: 8px;
    padding: 1px 0 0 2px;
    margin-right: -1px;
    border-right: 0;
    font-size: 13px;
}
.oiptabs{
    display: flex;
    align-items: center;
    height: 31px;
    margin-left: 4px;
    background: #f6f6f5;
}
.oiptabs a{
    padding: 2px 3px;
    border-right: 1px solid #999;
    font-size: 13px;
}
.oiptabs .on{
    padding: 2px 5px;
    border-right: 2px solid #222;
}
.oiptabs a:last-child{
    padding-right: 10px;
}
.objname{
    height: 23px;
    margin: 3px -2px 3px 2px;
    padding-left: 4px;
    border: 2px solid #999;
    font-weight: bold;
    line-height: 19px;
}
.info{
    flex: 1;
    margin-left: 2px;
    border: 1px solid #888;
    border-right: 0;
    font-family: "Liberation Sans", "Noto Sans CJK JP", sans-serif;
    white-space: nowrap;
}
.info hr{
    height: 12px;
    margin-top: 10px;
    border: 0;
    border-top: 1px solid #999;
}
.row{
    display: flex;
    align-items: center;
    gap: 4px;
    height: 21px;
    padding-left: 5px;
}
.row .drop{
    flex: 1;
    height: 20px;
    margin-right: -1px;
}
.col{
    display: grid;
    grid-template-columns: 71px 118px;
}
.col .drop{
    width: 77px;
}
.row input{
    width: 100px;
    height: 19px;
    padding-left: 3px;
    background: #fff;
    border: 1px solid #999;
}
.steps{
    display: flex;
    gap: 2px;
}
.steps button{
    width: 32px;
    height: 20px;
    padding: 0 7px;
    border: 1px solid #222;
    box-shadow: inset 1px 1px #fff, inset -1px -1px #aaa;
}
.steps svg{
    width: 16px;
    height: 12px;
}
.coords{
    display: flex;
    height: 62px;
    border: 1px solid #999;
    border-width: 1px 0;
}
.planes{
    flex: none;
    width: 51px;
    padding: 3px 0 0 4px;
}
.planes .on{
    width: 32px;
    height: 24px;
    margin-bottom: 4px;
    background: #a8d4f0;
    border: 1px solid #4a97cc;
}
.planes svg{
    width: 30px;
    height: 22px;
}
.xyz{
    height: 20px;
    padding: 0;
}
.xyz label{
    width: 25px;
}
.act{
    width: 100%;
    height: 20px;
    margin-bottom: 1px;
    background: #dcdcdc;
    border: 1px solid #aaa;
    border-right: 0;
}
.check{
    display: flex;
    align-items: center;
    gap: 8px;
    height: 21px;
    padding-left: 3px;
}
.check input{
    appearance: none;
    width: 15px;
    height: 15px;
    background: #fff;
    border: 1px solid #333;
}
.name{
    display: flex;
    align-items: center;
    gap: 8px;
    height: 25px;
    padding-left: 6px;
    white-space: nowrap;
}
.name input{
    width: 120px;
    height: 18px;
    background: #fff;
    border: 1px solid #666;
}

/* status bar */
.status{
    display: flex;
    flex: none;
    height: 22px;
    padding-top: 2px;
    line-height: 28px;
    white-space: nowrap;
    overflow: hidden;
}
.status p{
    flex: 1;
    margin-left: -8px;
    font-size: 12px;
}
.status span{
    width: 125px;
}
.snaps{
    display: grid;
    grid-template-columns: repeat(9, 1fr);
    gap: 2px;
    width: 264px;
}
.two{
    grid-template-columns: 28px 28px;
    width: 58px;
    margin: 0 -7px 0 7px;
}
.snaps button{
    height: 28px;
    background: #f3f3f2;
    border: 1px solid #aaa;
}
.snaps svg{
    width: 26px;
    height: 26px;
}
.snaps .on{
    background: #cbe3f5;
}
.snaps .dark{
    background: #9a9a9a;
}
```
